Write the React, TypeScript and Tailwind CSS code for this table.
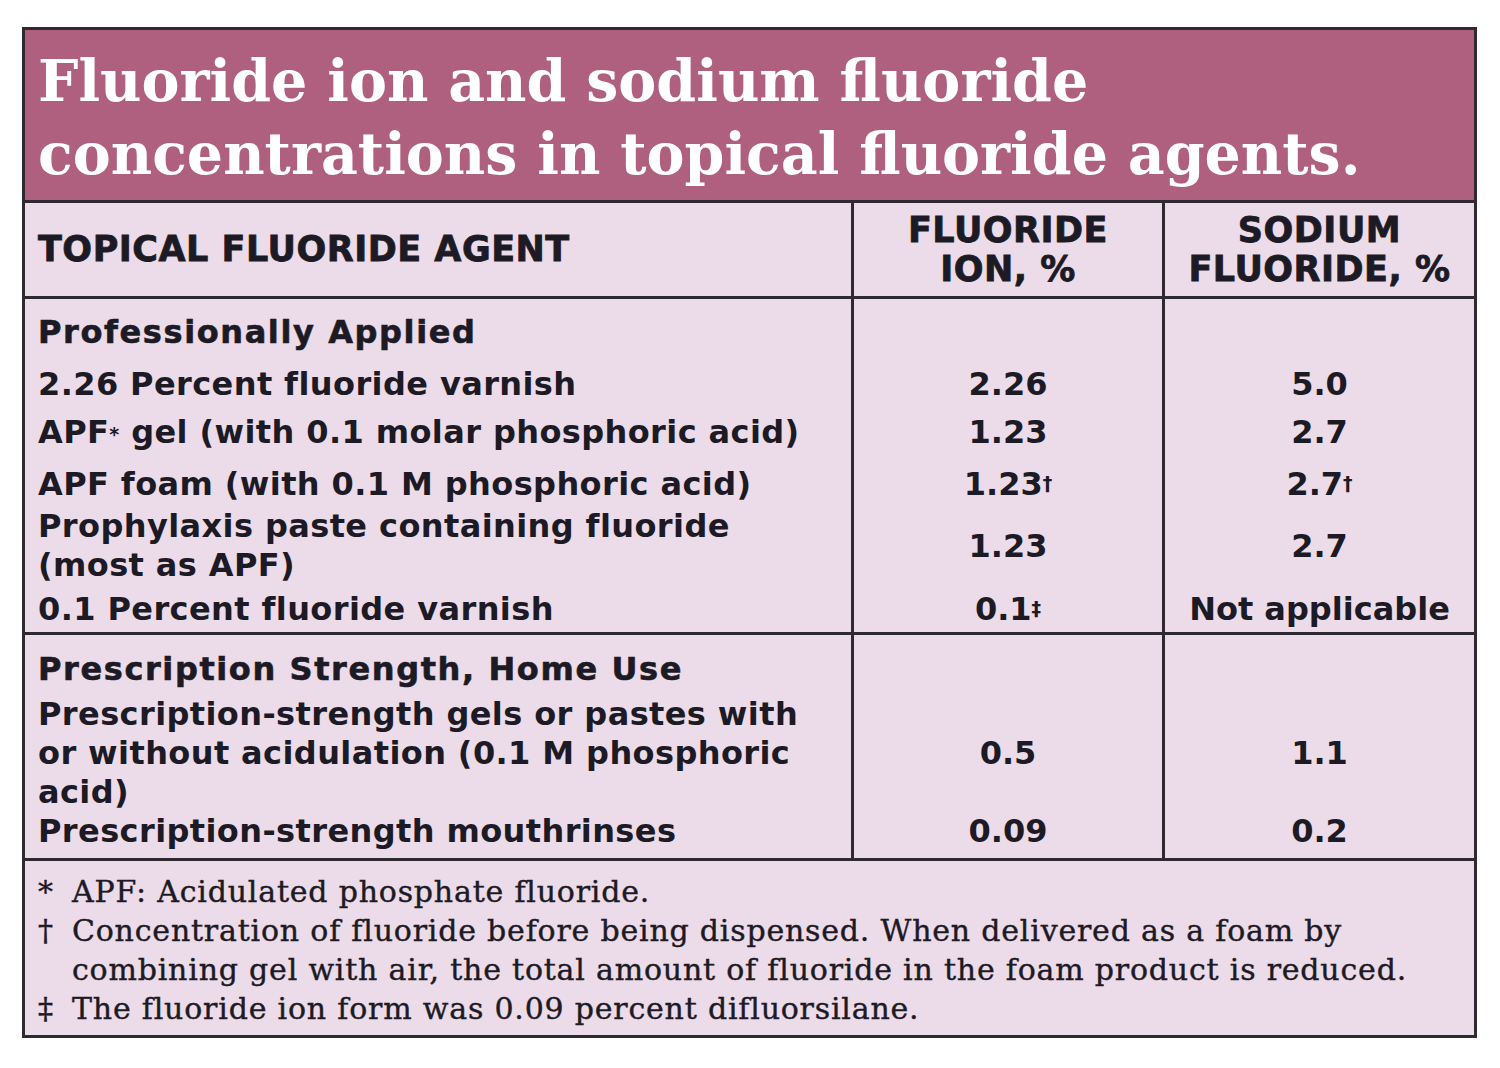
import type { ReactNode } from 'react';

interface Row {
  label: ReactNode;
  lines: 1 | 2 | 3;
  box: string;
  head?: boolean;
  ion?: ReactNode;
  sodium?: ReactNode;
}

const lineBox = {
  1: 'h-[39px]',
  2: 'h-[78px]',
  3: 'h-[117px]',
};

const Sup = ({ children }: { children: ReactNode }) => (
  <sup className="text-[19px] relative -top-[2px]">{children}</sup>
);

const professional: Row[] = [
  { label: 'Professionally Applied', lines: 1, box: 'h-[52px]', head: true },
  { label: '2.26 Percent fluoride varnish', lines: 1, box: 'h-[48px]', ion: '2.26', sodium: '5.0' },
  {
    label: (
      <>
        APF<Sup>*</Sup> gel (with 0.1 molar phosphoric acid)
      </>
    ),
    lines: 1,
    box: 'h-[52px]',
    ion: '1.23',
    sodium: '2.7',
  },
  {
    label: 'APF foam (with 0.1 M phosphoric acid)',
    lines: 1,
    box: 'h-[42px]',
    ion: (
      <>
        1.23<Sup>†</Sup>
      </>
    ),
    sodium: (
      <>
        2.7<Sup>†</Sup>
      </>
    ),
  },
  {
    label: (
      <>
        Prophylaxis paste containing fluoride
        <br />
        (most as APF)
      </>
    ),
    lines: 2,
    box: 'h-[83px]',
    ion: '1.23',
    sodium: '2.7',
  },
  {
    label: '0.1 Percent fluoride varnish',
    lines: 1,
    box: 'h-[39px]',
    ion: (
      <>
        0.1<Sup>‡</Sup>
      </>
    ),
    sodium: 'Not applicable',
  },
];

const prescription: Row[] = [
  { label: 'Prescription Strength, Home Use', lines: 1, box: 'h-[45px]', head: true },
  {
    label: (
      <>
        Prescription-strength gels or pastes with
        <br />
        or without acidulation (0.1 M phosphoric
        <br />
        acid)
      </>
    ),
    lines: 3,
    box: 'h-[117px]',
    ion: '0.5',
    sodium: '1.1',
  },
  { label: 'Prescription-strength mouthrinses', lines: 1, box: 'h-[39px]', ion: '0.09', sodium: '0.2' },
];

function Section({ rows, pad }: { rows: Row[]; pad: string }) {
  return (
    <div className="flex border-t-[3px] border-[#2e2a30]">
      {/* agent column */}
      <div className={`w-[826px] pl-[13px] ${pad}`}>
        {rows.map((r, i) => (
          <div key={i} className={r.box}>
            <div
              className={`leading-[39px] ${
                r.head ? 'tracking-[1.6px] [-webkit-text-stroke:0.6px_#1c1a24]' : 'tracking-[0.4px]'
              }`}
            >
              {r.label}
            </div>
          </div>
        ))}
      </div>
      {/* value columns */}
      {(['ion', 'sodium'] as const).map(key => (
        <div
          key={key}
          className={`${key === 'ion' ? 'w-[311px]' : 'w-[312px]'} border-l-[3px] border-[#2e2a30] ${pad}`}
        >
          {rows.map((r, i) => (
            <div key={i} className={r.box}>
              <div className={`${lineBox[r.lines]} flex items-center justify-center leading-[39px]`}>
                {r[key]}
              </div>
            </div>
          ))}
        </div>
      ))}
    </div>
  );
}

export default function App() {
  return (
    <div className="bg-white w-[1500px] h-[1068px] pl-[22px] pt-[27px]">
      <div className="w-[1455px] border-[3px] border-[#2e2a30] bg-[#ecdbe8] text-[#1c1a24]">
        {/* Title */}
        <div className="h-[170px] bg-[#b0607f] pl-[13px] pt-[14px] text-white font-['DejaVu_Serif',serif] font-bold text-[57px] leading-[73px]">
          Fluoride ion and sodium fluoride
          <br />
          concentrations in topical fluoride agents.
        </div>

        {/* Column headers */}
        <div className="flex h-[96px] border-t-[3px] border-[#2e2a30] font-['DejaVu_Sans',sans-serif] font-bold text-[35px] leading-[39px] tracking-[0.5px] [-webkit-text-stroke:0.8px_#1c1a24]">
          <div className="w-[826px] pl-[13px] flex items-center">TOPICAL FLUORIDE AGENT</div>
          <div className="w-[311px] border-l-[3px] border-[#2e2a30] flex items-center justify-center text-center">
            FLUORIDE
            <br />
            ION, %
          </div>
          <div className="w-[312px] border-l-[3px] border-[#2e2a30] flex items-center justify-center text-center">
            SODIUM
            <br />
            FLUORIDE, %
          </div>
        </div>

        <div className="font-['DejaVu_Sans',sans-serif] font-bold text-[32px]">
          <Section rows={professional} pad="pt-[14px] pb-[3px]" />
          <Section rows={prescription} pad="pt-[15px] pb-[7px]" />
        </div>

        {/* Footnotes */}
        <div className="border-t-[3px] border-[#2e2a30] pl-[13px] pt-[11px] pb-[7px] font-['DejaVu_Serif',serif] text-[30px] leading-[39px] tracking-[0.8px] [-webkit-text-stroke:0.4px_#1c1a24]">
          <div className="flex">
            <span className="w-[34px]">*</span>
            <span>APF: Acidulated phosphate fluoride.</span>
          </div>
          <div className="flex">
            <span className="w-[34px]">†</span>
            <span>
              Concentration of fluoride before being dispensed. When delivered as a foam by
              <br />
              combining gel with air, the total amount of fluoride in the foam product is reduced.
            </span>
          </div>
          <div className="flex">
            <span className="w-[34px]">‡</span>
            <span>The fluoride ion form was 0.09 percent difluorsilane.</span>
          </div>
        </div>
      </div>
    </div>
  );
}
